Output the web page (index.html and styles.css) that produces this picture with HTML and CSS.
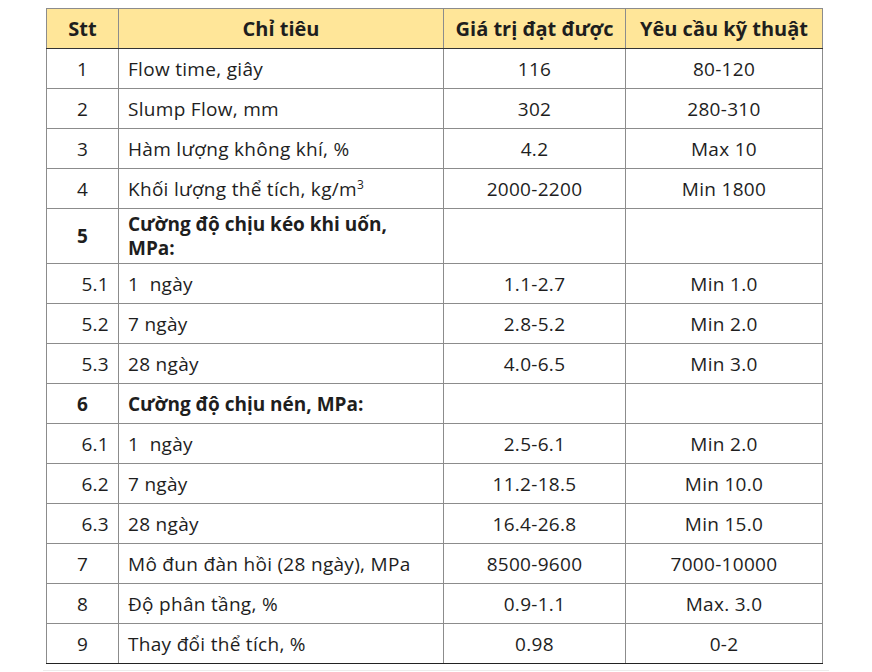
FILE: index.html
```html
<!DOCTYPE html>
<html lang="vi">
<head>
<meta charset="utf-8">
<link rel="stylesheet" href="styles.css">
</head>
<body>
<div class="wrap">
<table class="spec">
  <colgroup>
    <col class="c-stt"><col class="c-name"><col class="c-val"><col class="c-req">
  </colgroup>
  <thead>
    <tr><th>Stt</th><th>Chỉ tiêu</th><th>Giá trị đạt được</th><th>Yêu cầu kỹ thuật</th></tr>
  </thead>
  <tbody>
    <tr><td class="stt">1</td><td class="name">Flow time, giây</td><td>116</td><td>80-120</td></tr>
    <tr><td class="stt">2</td><td class="name">Slump Flow, mm</td><td>302</td><td>280-310</td></tr>
    <tr><td class="stt">3</td><td class="name">Hàm lượng không khí, %</td><td>4.2</td><td>Max 10</td></tr>
    <tr><td class="stt">4</td><td class="name">Khối lượng thể tích, kg/m<sup>3</sup></td><td>2000-2200</td><td>Min 1800</td></tr>
    <tr class="group tall"><td class="stt">5</td><td class="name">Cường độ chịu kéo khi uốn,<br>MPa:</td><td></td><td></td></tr>
    <tr><td class="stt sub">5.1</td><td class="name">1&nbsp; ngày</td><td>1.1-2.7</td><td>Min 1.0</td></tr>
    <tr><td class="stt sub">5.2</td><td class="name">7 ngày</td><td>2.8-5.2</td><td>Min 2.0</td></tr>
    <tr><td class="stt sub">5.3</td><td class="name">28 ngày</td><td>4.0-6.5</td><td>Min 3.0</td></tr>
    <tr class="group"><td class="stt">6</td><td class="name">Cường độ chịu nén, MPa:</td><td></td><td></td></tr>
    <tr><td class="stt sub">6.1</td><td class="name">1&nbsp; ngày</td><td>2.5-6.1</td><td>Min 2.0</td></tr>
    <tr><td class="stt sub">6.2</td><td class="name">7 ngày</td><td>11.2-18.5</td><td>Min 10.0</td></tr>
    <tr><td class="stt sub">6.3</td><td class="name">28 ngày</td><td>16.4-26.8</td><td>Min 15.0</td></tr>
    <tr><td class="stt">7</td><td class="name">Mô đun đàn hồi (28 ngày), MPa</td><td>8500-9600</td><td>7000-10000</td></tr>
    <tr><td class="stt">8</td><td class="name">Độ phân tầng, %</td><td>0.9-1.1</td><td>Max. 3.0</td></tr>
    <tr class="last"><td class="stt">9</td><td class="name">Thay đổi thể tích, %</td><td>0.98</td><td>0-2</td></tr>
  </tbody>
</table>
<div class="rule"></div>
</div>
</body>
</html>
```
FILE: styles.css
```css
html, body {
  margin: 0;
  padding: 0;
  background: #ffffff;
}
body {
  font-family: "Open Sans", Lato, "Liberation Sans", sans-serif;
  color: #1e1e1e;
}
.wrap {
  padding: 8px 0 0 46px;
  width: 782px;
}
.spec {
  border-collapse: collapse;
  table-layout: fixed;
  width: 776px;
  font-size: 19px;
  letter-spacing: 0.3px;
}
.c-stt { width: 72px; }
.c-name { width: 325px; }
.c-val { width: 182px; }
.c-req { width: 197px; }
.spec th, .spec td {
  border: 1px solid #8c8c8c;
  height: 39px;
  padding: 0 9px;
  text-align: center;
  vertical-align: middle;
  line-height: 24px;
}
.spec th {
  background: #ffe699;
  font-weight: 700;
  font-size: 20px;
  letter-spacing: 0;
  border-bottom: 1px solid #333;
}
.spec td.name {
  text-align: left;
}
.spec td.sub {
  text-align: right;
}
.spec tr.group td {
  font-weight: 700;
  letter-spacing: 0;
}
.spec tr.tall td {
  height: 54px;
}
.spec tr.last td {
  border-bottom: 1px solid #222;
}
.spec sup {
  font-size: 12px;
  line-height: 0;
  vertical-align: 7px;
}
.rule {
  margin: 6px 0 0 -3px;
  width: 786px;
  height: 1px;
  background: #ececec;
}
```
